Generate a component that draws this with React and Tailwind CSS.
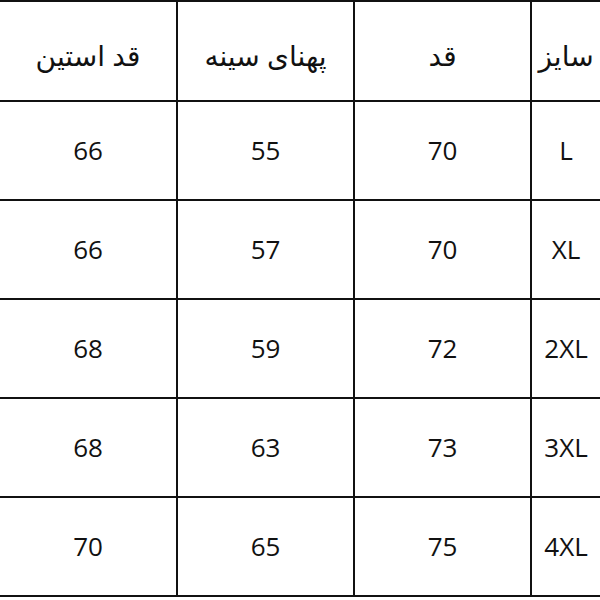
import React from "react";

const rows = [
  ["L", "70", "55", "66"],
  ["XL", "70", "57", "66"],
  ["2XL", "72", "59", "68"],
  ["3XL", "73", "63", "68"],
  ["4XL", "75", "65", "70"],
];

const header = ["سایز", "قد", "پهنای سینه", "قد استین"];
const widths = ["w-[70px]", "w-[177px]", "w-[177px]", "w-[176px]"];

const Row = ({ cells, height, head }) => (
  <div dir="rtl" className={`flex border-b-2 border-[#111] ${height}`}>
    {cells.map((c, i) => (
      <div
        key={i}
        className={`${widths[i]} flex items-center justify-center ${
          i < cells.length - 1 ? "border-l-2 border-[#111]" : ""
        }`}
      >
        <span className={head ? "text-[28px] pt-2" : ""}>{c}</span>
      </div>
    ))}
  </div>
);

export default function App() {
  return (
    <div
      className="w-[600px] h-[600px] bg-white text-[#111] text-[26px] overflow-hidden"
      style={{ fontFamily: '"Open Sans", "DejaVu Sans", sans-serif' }}
    >
      <div className="border-t-2 border-[#111]">
        <Row cells={header} height="h-[100px]" head />
        {rows.map((r, i) => (
          <Row key={i} cells={r} height="h-[99px]" />
        ))}
      </div>
    </div>
  );
}
